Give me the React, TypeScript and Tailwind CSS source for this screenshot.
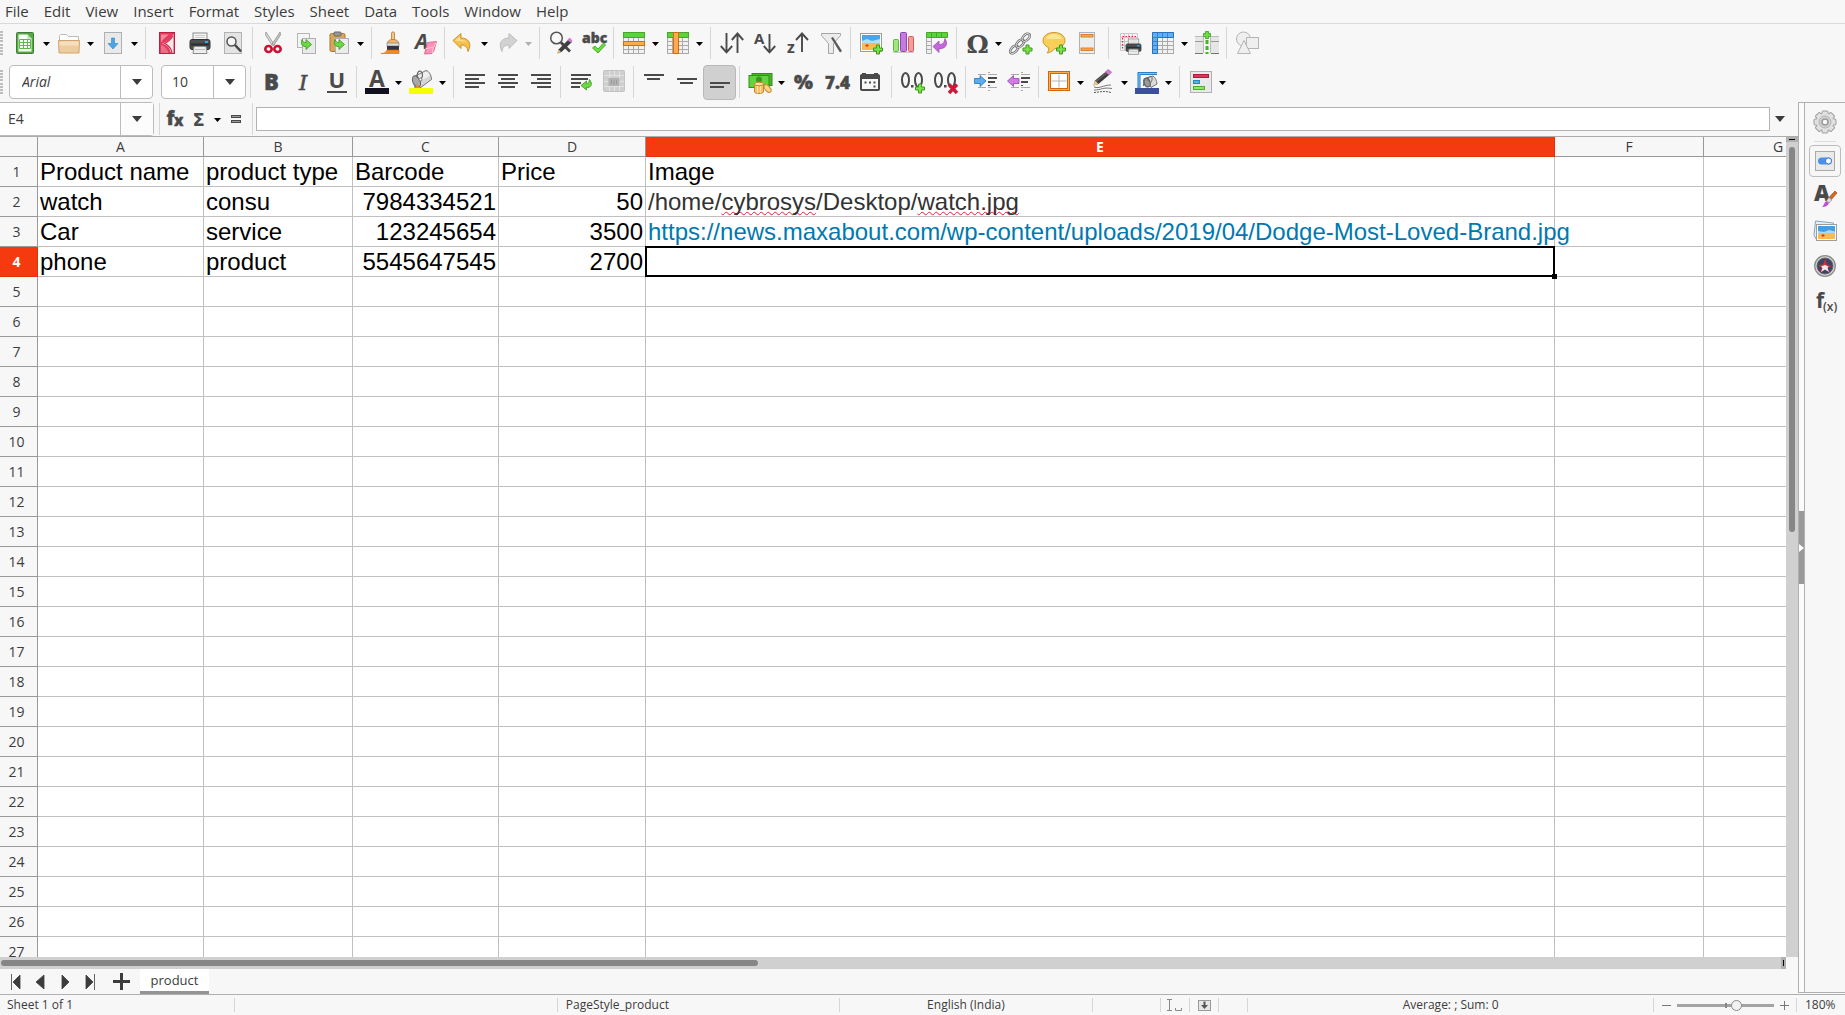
import React from "react";

const ui = "Open Sans, sans-serif";
const dark = "#4a4a4a";

const Plus = ({ x, y }: { x: number; y: number }) => (
  <path
    transform={`translate(${x} ${y})`}
    d="M3.500 .5h3v3h3v3h-3v3h-3v-3h-3v-3h3z"
    fill="#7be04a"
    stroke="#3f9a1e"
  />
);

const Lines = ({ rows }: { rows: [number, number, number][] }) => (
  <g fill={dark}>
    {rows.map(([x, y, w]) => (
      <rect key={y} x={x} y={y} width={w} height="2" />
    ))}
  </g>
);

const Printer = () => (
  <g>
    <rect x="5" y="2" width="14" height="8" fill="#f4f4f4" stroke="#8a8a8a" />
    <path d="M7 4.500h10M7 6.500h10" stroke="#ccc" />
    <rect x="2" y="8.500" width="20" height="10" rx="2" fill="#4b4f52" stroke="#333" />
    <path d="M3 13.500h18" stroke="#2c2e30" strokeWidth="2" />
    <rect x="17" y="10" width="3" height="2" fill="#35a7e8" />
    <path d="M6 15.500h12l1 7H5z" fill="#eee" stroke="#8a8a8a" />
    <path d="M7 18.500h10" stroke="#bbb" />
  </g>
);

const Grid = ({ c = "#aaa" }: { c?: string }) => (
  <g>
    <rect x="1.500" y="1.500" width="21" height="21" fill="#f1f1f1" stroke={c} />
    <path d="M2 6.500h20M2 10.500h20M2 14.500h20M2 18.500h20M6.500 2v20M11.500 2v20M16.500 2v20" stroke={c} fill="none" />
  </g>
);

const chain = [
  [5, 18.5],
  [11, 12.5],
  [17, 6.5],
];

const icons: Record<string, React.ReactNode> = {
  new: (
    <g>
      <rect x="3.500" y="1.500" width="17" height="21" rx="1" fill="#56a846" stroke="#3d7f31" />
      <path d="M5.500 3.500h9l4 4v13h-13z" fill="#f8fcf6" />
      <path d="M14.500 3.500l4 4h-4z" fill="#a8db9a" />
      <path d="M6.500 8.500h11v9h-11zM6.500 11.500h11M6.500 14.500h11M10.500 8.500v9M14.500 8.500v9" fill="none" stroke="#63b653" />
    </g>
  ),
  open: (
    <g>
      <path d="M2.500 10V4.500l1-1h6l2 2h10V10z" fill="#fdfdfd" stroke="#bbb" />
      <path d="M1.500 9.500h21l-.5 12.500H2z" fill="#edcda0" stroke="#cfa56d" />
      <path d="M2.500 10.500h19v4h-19z" fill="#f6dfbf" />
    </g>
  ),
  save: (
    <g>
      <rect x="3.500" y="1.500" width="17" height="21" fill="#e9e9e9" stroke="#b0b0b0" />
      <path d="M10.500 7h3v5.500h3.500L12 18 7 12.500h3.500z" fill="#4aa5e8" stroke="#2f86cb" strokeWidth=".6" />
    </g>
  ),
  pdf: (
    <g>
      <rect x="4.500" y="1.500" width="15" height="21" fill="#e33b5d" stroke="#bd1e41" />
      <path d="M6 3.500h8C10 6 8 9 6 11.500z" fill="#f2889e" />
      <path d="M18.500 3v19l-3-1C15 17 12 14 7 12.500 12 11.500 16 8 18.500 3z" fill="#fbe6ea" />
      <path d="M18 5c-2 3-5 6-8.500 7.500C13 14 16 17 17 21.500" fill="none" stroke="#cf2a4d" strokeWidth="1.200" />
      <path d="M6 14c4 1 6.500 4 7.500 8H6z" fill="#ee6d88" />
    </g>
  ),
  print: <Printer />,
  preview: (
    <g>
      <rect x="3.500" y="1.500" width="17" height="21" fill="#e4e4e4" stroke="#b3b3b3" />
      <circle cx="10.500" cy="10.500" r="4.500" fill="#f6f6f6" stroke="#555" strokeWidth="1.500" />
      <path d="M14 14l6 6.500" stroke="#444" strokeWidth="2.500" />
    </g>
  ),
  cut: (
    <g>
      <path d="M5 1l8.500 13h-2.500L4.500 4z" fill="#ddd" stroke="#8e8e8e" strokeWidth=".8" />
      <path d="M19 1l-8.500 13h2.500L19.500 4z" fill="#c5c5c5" stroke="#8e8e8e" strokeWidth=".8" />
      <ellipse cx="7.500" cy="18" rx="3.200" ry="3" fill="#fff" stroke="#cf1030" strokeWidth="2.600" />
      <ellipse cx="16.500" cy="18" rx="3.200" ry="3" fill="#fff" stroke="#cf1030" strokeWidth="2.600" />
    </g>
  ),
  copy: (
    <g>
      <rect x="3.500" y="2.500" width="12" height="14" fill="#f5f5f5" stroke="#b5b5b5" />
      <rect x="8.500" y="7.500" width="13" height="15" fill="#e9e9e9" stroke="#b0b0b0" />
      <path d="M8 8.500c-2 5 1 7.500 4 7v3l5.500-5-5.500-5v3c-2 0-3.500-.5-4-3z" fill="#6bd844" stroke="#3a9420" strokeWidth=".8" />
    </g>
  ),
  paste: (
    <g>
      <rect x="3" y="2.500" width="15" height="18" rx="1.500" fill="#d9a55c" stroke="#a97731" />
      <rect x="7" y="1" width="7" height="4" rx="1" fill="#999" stroke="#666" />
      <rect x="8.500" y="7.500" width="13" height="15" fill="#ececec" stroke="#b0b0b0" />
      <path d="M8 8.500c-2 5 1 7.500 4 7v3l5.500-5-5.500-5v3c-2 0-3.500-.5-4-3z" fill="#6bd844" stroke="#3a9420" strokeWidth=".8" />
    </g>
  ),
  brush: (
    <g>
      <path d="M10.500 2c0-1.500 3-1.500 3 0v7h-3z" fill="#f2c488" stroke="#b87a35" strokeWidth=".8" />
      <path d="M6.500 12.500c0-3 2-4 5.500-4s5.500 1 5.500 4z" fill="#f4b564" stroke="#b87a35" strokeWidth=".8" />
      <rect x="6" y="12" width="12" height="3" fill="#dcdcdc" stroke="#777" strokeWidth=".6" />
      <rect x="6" y="15" width="12" height="4" fill="#33363c" />
      <path d="M6 19h12v3.500H0c3 0 5-.8 6-3.500z" fill="#f08c28" stroke="#c76b12" strokeWidth=".6" />
    </g>
  ),
  clear: (
    <g>
      <text x="1" y="18" fontFamily={ui} fontSize="21" fontWeight="700" fontStyle="italic" fill={dark}>A</text>
      <path d="M13.500 11.500l9-1-2.500 9-2 3-7.500.5 1.500-6z" fill="#ff8fb4" stroke="#d65c86" strokeWidth=".8" />
      <path d="M11.500 17.500l8-1 2.500-5M19.500 16.500l-1.500 5.500" fill="none" stroke="#ffd0de" strokeWidth=".9" />
    </g>
  ),
  undo: (
    <g>
      <path d="M2 9.500l8-7v4.500c7 0 11.500 5 7 13.500-.3-4.500-3-6.500-7-6.500v3.500z" fill="#f5c04c" stroke="#d08f26" />
      <path d="M4 9.500l5-4.500v3.500c3 0 5.500 1 7 3-3-1-6-1.500-11.500-1.500z" fill="#fbdc8c" />
    </g>
  ),
  redo: (
    <path d="M22 9.500l-8-7v4.500c-7 0-11.500 5-7 13.500.3-4.500 3-6.500 7-6.500v3.500z" fill="#d2d2d2" stroke="#bdbdbd" />
  ),
  find: (
    <g>
      <circle cx="7.500" cy="7" r="5.800" fill="#f8f8f8" stroke="#555" strokeWidth="1.500" />
      <path d="M12 11.500l9 9" stroke="#444" strokeWidth="2.800" />
      <path d="M20 8l3 3L12.500 21l-4 1.500 1-4z" fill="#3f3f3f" />
      <path d="M18.500 9l2-2.500 3 3-2 2z" fill="#d979d2" />
      <path d="M9.500 18.500l2.500 2.500-4 1.500z" fill="#e7c188" />
    </g>
  ),
  spell: (
    <g>
      <text x="0" y="12" fontFamily={ui} fontSize="14" fontWeight="800" fill={dark} stroke={dark} strokeWidth=".4">abc</text>
      <path d="M10.500 17l2.500-2 3 3 5.500-6 2 2-7.500 8z" fill="#6bdc41" stroke="#3a9a1c" strokeWidth=".8" />
    </g>
  ),
  row: (
    <g>
      <Grid />
      <rect x="1.500" y="1.500" width="21" height="5" fill="#5fd23a" stroke="#45a827" />
      <rect x="1.500" y="10.500" width="21" height="4" fill="#ffab4d" stroke="#d86b12" />
    </g>
  ),
  col: (
    <g>
      <Grid />
      <rect x="1.500" y="1.500" width="21" height="5" fill="#5fd23a" stroke="#45a827" />
      <rect x="7.500" y="1.500" width="5" height="21" fill="#ffab4d" stroke="#d86b12" />
    </g>
  ),
  sort: (
    <path d="M6.500 2v19M.8 15l5.700 6.300L12.200 15M17.500 22V2.500M11.800 9l5.700-6.500L23.200 9" fill="none" stroke={dark} strokeWidth="1.900" />
  ),
  az: (
    <g>
      <text x="1" y="12.500" fontFamily={ui} fontSize="15" fontWeight="700" fill={dark}>A</text>
      <path d="M16.500 3v18M10.800 15l5.700 6.300 5.700-6.300" fill="none" stroke={dark} strokeWidth="1.900" />
    </g>
  ),
  za: (
    <g>
      <text x="1" y="22" fontFamily={ui} fontSize="16" fontWeight="700" fill={dark}>z</text>
      <path d="M16 21V2.500M10 9l6-6.500L22 9" fill="none" stroke={dark} strokeWidth="1.900" />
    </g>
  ),
  filter: (
    <g>
      <path d="M2.500 2.500h19v2l-7 8v10h-5v-10l-7-8z" fill="#ececec" stroke="#a5a5a5" />
      <path d="M12 7l2-1 9 14-2 1.500z" fill="#5a5a5a" />
    </g>
  ),
  image: (
    <g>
      <rect x="1.500" y="2.500" width="21" height="18" fill="#fff" stroke="#9d9d9d" />
      <rect x="3" y="4" width="18" height="9" fill="#4aa6ea" />
      <path d="M3 10l5-2 5 2 8-2v5H3z" fill="#b4ddf8" />
      <rect x="3" y="12" width="18" height="7" fill="#f7bb54" />
      <path d="M6 14.500l2-1.500 2 1.500-2 1.500z" fill="#e33b2e" />
      <Plus x={14} y={13.5} />
    </g>
  ),
  chart: (
    <g>
      <rect x="1.500" y="8.500" width="5" height="12" rx="1" fill="#a1e57f" stroke="#5bb938" />
      <rect x="8.500" y="1.500" width="6" height="19" rx="1" fill="#c47be0" stroke="#9442b8" />
      <rect x="16.500" y="5.500" width="5" height="15" rx="1" fill="#f29c9c" stroke="#d25959" />
      <path d="M1 21.500h21" stroke="#ccc" />
    </g>
  ),
  pivot: (
    <g>
      <path d="M1.500 6.500h5v16h-5zM1.500 10.500h5M1.500 14.500h5M1.500 18.500h5" fill="#eee" stroke="#aaa" />
      <path d="M1.500 1.500h21v5h-21zM6.500 2v4M11.500 2v4M16.500 2v4" fill="#5fd23a" stroke="#45a827" />
      <path d="M8 15.500l6-5.500v3.500c4 0 5-1.500 6-6 4 7-.5 10.500-6 10v4z" fill="#c566dd" stroke="#9a3fb4" strokeWidth=".7" />
    </g>
  ),
  omega: (
    <text x="1.500" y="21.500" fontFamily="DejaVu Serif, serif" fontSize="25" fontWeight="700" fill={dark}>Ω</text>
  ),
  link: (
    <g fill="none">
      {chain.map(([x, y]) => (
        <g key={x} transform={`rotate(45 ${x} ${y})`}>
          <ellipse cx={x} cy={y} rx="2.700" ry="4.600" stroke="#6d6d6d" strokeWidth="2.600" />
          <ellipse cx={x} cy={y} rx="2.700" ry="4.600" stroke="#dcdcdc" strokeWidth="1" />
        </g>
      ))}
      <Plus x={13.5} y={13.5} />
    </g>
  ),
  comment: (
    <g>
      <path d="M12 1.500c6.500 0 11 3.500 11 8s-4.500 8-10 8c-3 3-5 4-8 4.500 1.500-1.500 2-3.500 1.500-5.500C3 15 1 12.500 1 9.500c0-4.500 4.500-8 11-8z" fill="#f9cf58" stroke="#cf962c" />
      <path d="M4 8c1-3 4-5 8-5s7 2 8 5z" fill="#fde596" />
      <Plus x={14} y={13.5} />
    </g>
  ),
  header: (
    <g>
      <rect x="4.500" y="1.500" width="15" height="21" fill="#ededed" stroke="#b0b0b0" />
      <rect x="6" y="3.500" width="12" height="2.500" fill="#ffab4d" stroke="#d86b12" strokeWidth=".8" />
      <rect x="6" y="17" width="12" height="2.500" fill="#ffab4d" stroke="#d86b12" strokeWidth=".8" />
    </g>
  ),
  printarea: (
    <g>
      <path d="M2.500 2.500h17v17h-17zM6.500 3v17M10.500 3v17M14.500 3v17M3 6.500h17M3 10.500h17M3 14.500h17" fill="#f4f4f4" stroke="#c9c9c9" />
      <path d="M18 5.500H4.500V18" fill="none" stroke="#e02045" strokeWidth="1.200" strokeDasharray="1.500 1.500" />
      <g transform="translate(6.500 6.500) scale(.75)"><Printer /></g>
    </g>
  ),
  freeze: (
    <g>
      <Grid />
      <path d="M1.500 1.500h21v5h-16v16h-5z" fill="#5fb0f2" stroke="#2b73b8" />
      <path d="M2 6.500h4M2 10.500h4M2 14.500h4M2 18.500h4M6.500 2v4M11.500 2v4M16.500 2v4" stroke="#2b73b8" strokeWidth=".7" />
    </g>
  ),
  split: (
    <g>
      <path d="M0 5.500h8M16 5.500h8M8.500 5v17M15.500 5v17" stroke="#bbb" />
      <path d="M0 6h8v4H0zM16 6h8v4h-8zM0 11h8v11H0zM16 11h8v11h-8z" fill="#e6e6e6" />
      <path d="M0 10.500h8M16 10.500h8" stroke="#999" />
      <path d="M0 22.500h8M16 22.500h8" stroke="#777" />
      <path d="M12 9v14" stroke="#45b524" strokeWidth="3" strokeDasharray="4 2" />
      <path d="M10.500 .5h3v2h2v3h-2v2h-3v-2h-2v-3h2z" fill="#6bdc41" stroke="#3a9a1c" strokeWidth=".8" />
    </g>
  ),
  shapes: (
    <g fill="#efefef" stroke="#b5b5b5">
      <circle cx="8.500" cy="8" r="7" />
      <rect x="11.500" y="6.500" width="12" height="11" />
      <path d="M9 9.500l6.500 13h-13z" />
    </g>
  ),
  bold: <text x="5" y="20" fontFamily={ui} fontSize="22" fontWeight="800" fill={dark} stroke={dark} strokeWidth=".5">B</text>,
  italic: <text x="7" y="20" fontFamily="DejaVu Serif, serif" fontSize="21" fontStyle="italic" fontWeight="400" fill={dark} stroke={dark} strokeWidth=".6">I</text>,
  underline: (
    <g>
      <text x="3.500" y="18" fontFamily={ui} fontSize="22" fontWeight="700" fill={dark}>U</text>
      <rect x="2" y="21" width="20" height="2" fill={dark} />
    </g>
  ),
  fontcolor: (
    <g>
      <text x="4" y="16.500" fontFamily={ui} fontSize="23" fontWeight="700" fill={dark}>A</text>
      <rect x="0" y="18" width="24" height="6" fill="#101020" />
    </g>
  ),
  highlight: (
    <g>
      <path d="M4.500 7L17 .5c3 .5 5.500 5 5.500 9L11 18H6z" fill="#d6d6d6" stroke="#777" />
      <path d="M9 5.500l8-4c2 .5 3 2 4 4L12 11z" fill="#efefef" />
      <ellipse cx="7.500" cy="11.500" rx="3.600" ry="6" transform="rotate(-25 7.500 11.500)" fill="#a9a9a9" stroke="#666" />
      <path d="M8.500 8C7 3 10 0 12 1.500s2 5 0 8" fill="none" stroke="#666" strokeWidth="1.200" />
      <circle cx="11.500" cy="9.500" r="1.500" fill="#eee" stroke="#666" strokeWidth=".8" />
      <path d="M8 13.500l3 4.500H7z" fill="#f08c28" />
      <rect x="0" y="18" width="24" height="6" fill="#f4ff00" />
    </g>
  ),
  left: <Lines rows={[[2, 4, 20], [2, 8, 14], [2, 12, 20], [2, 16, 14]]} />,
  center: <Lines rows={[[2, 4, 20], [5, 8, 14], [2, 12, 20], [5, 16, 14]]} />,
  right: <Lines rows={[[2, 4, 20], [8, 8, 14], [2, 12, 20], [8, 16, 14]]} />,
  wrap: (
    <g>
      <Lines rows={[[2, 4, 20], [2, 8, 17], [2, 12, 10], [2, 16, 9]]} />
      <path d="M12 15.500l5.500-4.500v2.500c2 0 2.500-1 3-4 4 5 1 8.500-3 8v2.500z" fill="#6bd844" stroke="#3a9420" strokeWidth=".8" />
    </g>
  ),
  merge: (
    <g>
      <rect x="1.500" y=".5" width="21" height="21" rx="1" fill="#cfcfcf" stroke="#c2c2c2" />
      <path d="M2 5.500h20M2 16.500h20M7.500 1v20M12.500 1v5M12.500 17v4M17.500 1v20M2 11.500h5M18 11.500h4" stroke="#e4e4e4" />
      <rect x="6.500" y="8" width="11" height="8" fill="#b2b2b2" />
      <path d="M9.500 10v4M12 10v4M14.500 10v4" stroke="#9a9a9a" />
    </g>
  ),
  top: <Lines rows={[[2, 4, 20], [5, 8, 13]]} />,
  middle: <Lines rows={[[2, 8, 20], [5, 12, 13]]} />,
  bottom: <Lines rows={[[2, 12, 20], [2, 16, 14]]} />,
  currency: (
    <g>
      <rect x="4" y="3.500" width="20" height="12" fill="#48b828" stroke="#2f8f17" />
      <rect x="1" y="5.500" width="20" height="12" fill="#62d53c" stroke="#2f8f17" />
      <circle cx="11" cy="9.500" r="3" fill="#349a1b" />
      <ellipse cx="19.500" cy="18.500" rx="2.500" ry="4.500" transform="rotate(-40 19.500 18.500)" fill="#fbd48c" stroke="#c8862c" />
      <path d="M6.500 14v8c1 2 8 2 9 0v-8z" fill="#f6c069" stroke="#c8862c" />
      <ellipse cx="11" cy="14" rx="4.500" ry="1.800" fill="#fde0a8" stroke="#c8862c" />
      <path d="M9.500 16v7M12.500 16v7" stroke="#fbe1b2" />
    </g>
  ),
  percent: <text x="2" y="19" fontFamily={ui} fontSize="20" fontWeight="800" fill={dark} stroke={dark} strokeWidth=".5">%</text>,
  number: <text x="0" y="18.500" fontFamily={ui} fontSize="17" fontWeight="800" fill={dark} stroke={dark} strokeWidth=".5">7.4</text>,
  date: (
    <g>
      <rect x="3" y="5" width="18" height="15" rx="1" fill="#f7f7f7" stroke={dark} strokeWidth="2" />
      <path d="M2 5.500h20v3.500H2zM4 3h4v3H4zM16 3h4v3h-4z" fill={dark} />
      <path d="M6.500 11.500h2v2h-2zM11 11.500h2v2h-2zM15.500 11.500h2v2h-2zM15.500 15.500h2v2h-2z" fill={dark} />
    </g>
  ),
  decadd: (
    <g>
      <g fill="none" stroke={dark} strokeWidth="2">
        <ellipse cx="4.500" cy="10" rx="3.500" ry="7" />
        <ellipse cx="17.500" cy="10" rx="3.500" ry="7" />
      </g>
      <rect x="10" y="15" width="2.500" height="2.500" fill={dark} />
      <Plus x={14} y={13.5} />
    </g>
  ),
  decdel: (
    <g>
      <g fill="none" stroke={dark} strokeWidth="2">
        <ellipse cx="4.500" cy="10" rx="3.500" ry="7" />
        <ellipse cx="17.500" cy="10" rx="3.500" ry="7" />
      </g>
      <rect x="10" y="15" width="2.500" height="2.500" fill={dark} />
      <path d="M15 14.500l8 8.500M23 14.500l-8 8.500" stroke="#cf1838" strokeWidth="3.400" />
    </g>
  ),
  indent: (
    <g>
      <path d="M4 4.500h8M4 17.500h8M14 2.500h2M14 4.500h9M14 17.500h9M14 20.500h2" stroke="#aaa" />
      <path d="M14 8h9M14 12h7" stroke={dark} strokeWidth="2" />
      <path d="M14 15.500h2" stroke={dark} />
      <path d="M.5 8.500h5.500v-3l6 5.500-6 5.500v-3H.5z" fill="#58acf0" stroke="#2a72b4" strokeWidth=".8" />
    </g>
  ),
  outdent: (
    <g>
      <path d="M4 4.500h8M4 17.500h8M14 2.500h2M14 4.500h9M14 17.500h9M14 20.500h2" stroke="#aaa" />
      <path d="M14 8h9M14 12h7" stroke={dark} strokeWidth="2" />
      <path d="M14 15.500h2" stroke={dark} />
      <path d="M12 8.500H6.500v-3l-6 5.500 6 5.500v-3H12z" fill="#cf7be3" stroke="#9942b4" strokeWidth=".8" />
    </g>
  ),
  borders: (
    <g>
      <rect x="2.500" y="2.500" width="19" height="17" fill="#fff" stroke="#d4660c" strokeWidth="3" />
      <rect x="2.500" y="2.500" width="19" height="17" fill="none" stroke="#ffb054" />
      <path d="M12 4.500v13M4.500 11h15" stroke="#b5b5b5" />
    </g>
  ),
  line: (
    <g>
      <path d="M3 17c6 2 9-2 17-2M3 20c8 0 8-3 18-1.500" fill="none" stroke="#777" />
      <path d="M3 22.500c7-.5 10-2 17 0" fill="none" stroke="#555" strokeDasharray="2 1" />
      <path d="M2.500 15.500l1.500-5L14.500 2l3.500 3L7.500 14z" fill="#3e3e3e" />
      <path d="M5 11.500L15.500 3" stroke="#777" />
      <path d="M14.500 2L17-.5 20.500 2 18 5z" fill="#d979d2" stroke="#a04a9a" strokeWidth=".6" />
      <path d="M2.500 15.500l1.500-5 3.500 3.500z" fill="#ecc88f" />
    </g>
  ),
  fill: (
    <g>
      <path d="M4 18V3.500h18" fill="none" stroke="#2f7fc6" strokeWidth="3" />
      <path d="M4 18V3.500h18" fill="none" stroke="#7cc2f6" />
      <path d="M11 8l7-2c2 1 4 5 4 8l-6 3.500z" fill="#dadada" stroke="#777" />
      <ellipse cx="12" cy="12.500" rx="3" ry="4.500" transform="rotate(-20 12 12.500)" fill="#9a9a9a" stroke="#555" />
      <path d="M13 11c0-3 1-5 3-4.500s1 4 0 6" fill="none" stroke="#666" />
      <path d="M8.500 16c0-4 1-6 2.500-8" fill="none" stroke="#666" />
      <rect x="0" y="18" width="24" height="6" fill="#3b4f9e" />
    </g>
  ),
  cond: (
    <g>
      <rect x="1.500" y="1.500" width="21" height="21" fill="#e9e9e9" stroke="#b0b0b0" />
      <rect x="4.500" y="4.500" width="15" height="3" fill="#e0355a" stroke="#b01c3e" />
      <rect x="4.500" y="10.500" width="6" height="3" fill="#5aaef0" stroke="#2f7fc6" />
      <rect x="4.500" y="16.500" width="11" height="3" fill="#8ee36a" stroke="#4fae2d" />
    </g>
  ),
  fx: (
    <g fontFamily={ui} fontWeight="800" fill={dark} stroke={dark} strokeWidth=".4">
      <text x="2.500" y="18" fontSize="19">f</text>
      <text x="10" y="19" fontSize="15">x</text>
    </g>
  ),
  sum: <text x="4.500" y="18.500" fontFamily="DejaVu Sans, sans-serif" fontSize="18" fontWeight="700" fill={dark}>Σ</text>,
  equals: (
    <g fill="#999" stroke={dark}>
      <rect x="7.500" y="8.500" width="9" height="2" />
      <rect x="7.500" y="13.500" width="9" height="2" />
    </g>
  ),
  gear: (
    <g>
      {[0, 45, 90, 135].map((a) => (
        <rect key={a} x="9" y="1" width="6" height="22" rx="1" fill="#e1e1e1" stroke="#9d9d9d" transform={`rotate(${a} 12 12)`} />
      ))}
      <circle cx="12" cy="12" r="8.500" fill="#e1e1e1" />
      <circle cx="12" cy="12" r="6" fill="#d2d2d2" stroke="#b2b2b2" />
      <circle cx="12" cy="12" r="3" fill="#f7f7f7" stroke="#999" strokeWidth="1.500" />
    </g>
  ),
  properties: (
    <g>
      <rect x="2.500" y="2.500" width="19" height="19" fill="#e9e9e9" stroke="#aaa" />
      <rect x="5" y="8.500" width="14" height="7" rx="3.500" fill="#4a90e8" />
      <circle cx="15.500" cy="12" r="3" fill="#fff" stroke="#3b7bcf" />
    </g>
  ),
  styles: (
    <g>
      <text x="1" y="17" fontFamily={ui} fontSize="22" fontWeight="800" fill={dark}>A</text>
      <path d="M22 7l2 2-7 8-2.500-2z" fill="#d9661f" stroke="#8e3d10" strokeWidth=".6" />
      <path d="M16 13.500l3 2.500-3 3-2.500-2.500z" fill="#ddd" stroke="#888" strokeWidth=".6" />
      <path d="M13.500 17l2.500 2c-1.500 3-3.500 4-7 4 2-1.500 2-4.500 4.500-6z" fill="#c14fd6" />
    </g>
  ),
  gallery: (
    <g>
      <path d="M3 20L1 16 2.500 2l18 2v6z" fill="#dff1fb" stroke="#8aa4b5" />
      <rect x="3.500" y="5.500" width="20" height="16" fill="#fff" stroke="#9d9d9d" />
      <rect x="5" y="7" width="17" height="7" fill="#3f9fe8" />
      <path d="M5 12l6 1 5-2 6 1.500V15H5z" fill="#a9d8f7" />
      <rect x="5" y="14" width="17" height="6" fill="#f7bb54" />
      <path d="M8 16.500l2-1.500 2 1.500-2 1.500z" fill="#e33b2e" />
    </g>
  ),
  navigator: (
    <g>
      <circle cx="12" cy="12" r="10.300" fill="#d4d4d4" stroke="#8c8c8c" strokeWidth="1.300" />
      <circle cx="12" cy="12" r="8" fill="#3e4468" stroke="#666" />
      <path d="M12.500 4.500l1 6 5.500 1.500-4.500 2 1.500 4-4-2.500-4.500 3 1.500-4.500L5 11l5-.5z" fill="#d92b3a" />
      <path d="M12 11l3.500 1.500-1 1.500 1.500 4-4-2.500-4 2.500 1.500-4-1.500-1.500z" fill="#ececec" />
    </g>
  ),
  functions: (
    <g fontFamily={ui} fill={dark}>
      <text x="3" y="19" fontSize="21" fontWeight="700">f</text>
      <text x="10" y="22" fontSize="12" fontWeight="600">(x)</text>
    </g>
  ),
};

const Icon = ({ name }: { name: string }) => (
  <svg viewBox="0 0 24 24" className="size-6 shrink-0 overflow-visible" aria-hidden="true">
    {icons[name]}
  </svg>
);

const Caret = ({ className = "fill-black" }: { className?: string }) => (
  <svg viewBox="0 0 7 4" className={`h-1 w-[7px] ${className}`} aria-hidden="true">
    <path d="M0 0h7L3.500 4z" />
  </svg>
);

const BigCaret = () => (
  <svg viewBox="0 0 10 6" className="h-1.5 w-2.5 fill-[#3c3c3c]" aria-hidden="true">
    <path d="M0 0h10L5 6z" />
  </svg>
);

type Item = { k: "b" | "s" | "sep4" | "sep7" | "sep10"; icon?: string; label?: string; on?: boolean; off?: boolean };
const b = (icon: string, label: string): Item => ({ k: "b", icon, label });
const s = (icon: string, label: string): Item => ({ k: "s", icon, label });
const sep4: Item = { k: "sep4" };
const sep7: Item = { k: "sep7" };
const sep10: Item = { k: "sep10" };

const standardBar: Item[] = [
  s("new", "New"), s("open", "Open"), s("save", "Save"), sep10,
  b("pdf", "Export as PDF"), b("print", "Print"), b("preview", "Print Preview"), sep7,
  b("cut", "Cut"), b("copy", "Copy"), s("paste", "Paste"), sep10,
  b("brush", "Clone Formatting"), b("clear", "Clear Formatting"), sep4,
  s("undo", "Undo"), { ...s("redo", "Redo"), off: true }, sep10,
  b("find", "Find and Replace"), b("spell", "Spelling"), sep7,
  s("row", "Row"), s("col", "Column"), sep10,
  b("sort", "Sort"), b("az", "Sort Ascending"), b("za", "Sort Descending"), b("filter", "AutoFilter"), sep7,
  b("image", "Insert Image"), b("chart", "Insert Chart"), b("pivot", "Pivot Table"), sep7,
  s("omega", "Special Character"), b("link", "Hyperlink"), b("comment", "Comment"), b("header", "Headers and Footers"), sep10,
  b("printarea", "Define Print Area"), s("freeze", "Freeze Rows and Columns"), b("split", "Split Window"), sep7,
  b("shapes", "Draw Functions"),
];

const formatBar: Item[] = [
  b("bold", "Bold"), b("italic", "Italic"), b("underline", "Underline"), sep7,
  s("fontcolor", "Font Color"), s("highlight", "Background Color"), sep10,
  b("left", "Align Left"), b("center", "Center"), b("right", "Align Right"), sep7,
  b("wrap", "Wrap Text"), b("merge", "Merge Cells"), sep7,
  b("top", "Align Top"), b("middle", "Center Vertically"), { ...b("bottom", "Align Bottom"), on: true }, sep7,
  s("currency", "Currency"), b("percent", "Percent"), b("number", "Number"), b("date", "Date"), sep10,
  b("decadd", "Add Decimal Place"), b("decdel", "Delete Decimal Place"), sep7,
  b("indent", "Increase Indent"), b("outdent", "Decrease Indent"), sep7,
  s("borders", "Borders"), s("line", "Border Style"), s("fill", "Border Color"), sep10,
  s("cond", "Conditional Formatting"),
];

const sepWidth = { sep4: "w-1", sep7: "w-[7px]", sep10: "w-2.5" };

const Sep = ({ width }: { width: string }) => (
  <span className={`flex h-8 shrink-0 justify-center ${width}`}>
    <span className="w-px bg-[#d6d6d6]" />
  </span>
);

const Tools = ({ items }: { items: Item[] }) => (
  <>
    {items.map((it, i) => {
      if (it.k !== "b" && it.k !== "s") return <Sep key={i} width={sepWidth[it.k]} />;
      const main = (
        <button
          type="button"
          aria-label={it.label}
          aria-pressed={it.on}
          disabled={it.off}
          className={`flex h-[35px] w-[33px] shrink-0 items-center justify-center rounded-[4px] ${it.on ? "border border-[#b9b9b9] bg-[#d0d0d0]" : ""}`}
        >
          <Icon name={it.icon!} />
        </button>
      );
      if (it.k === "b") return <React.Fragment key={i}>{main}</React.Fragment>;
      return (
        <span key={i} className="flex shrink-0">
          {main}
          <button type="button" aria-label={`${it.label} options`} disabled={it.off} className="flex w-[11px] items-center justify-center pt-0.5">
            <Caret className={it.off ? "fill-[#b0b0b0]" : "fill-black"} />
          </button>
        </span>
      );
    })}
  </>
);

const Grip = () => (
  <span className="flex h-6 w-[3px] shrink-0 flex-col justify-between">
    {[0, 1, 2, 3, 4, 5, 6, 7].map((n) => (
      <span key={n} className="h-0.5 bg-[#bdbdbd]" />
    ))}
  </span>
);

const Combo = ({ label, value, options, className, pad }: { label: string; value: string; options: string[]; className: string; pad: string }) => (
  <div className={`relative h-[34px] shrink-0 ${className}`}>
    <select aria-label={label} defaultValue={value} className={`size-full appearance-none rounded-[4px] border border-[#bcbcbc] bg-white pr-9 text-[#3c3c3c] ${pad}`}>
      {options.map((o) => (
        <option key={o}>{o}</option>
      ))}
    </select>
    <span className="pointer-events-none absolute inset-y-px right-px flex w-8 items-center justify-center border-l border-[#bcbcbc]">
      <BigCaret />
    </span>
  </div>
);

const menus = ["File", "Edit", "View", "Insert", "Format", "Styles", "Sheet", "Data", "Tools", "Window", "Help"];
const columns = [
  { n: "A", w: "w-[166px]" },
  { n: "B", w: "w-[149px]" },
  { n: "C", w: "w-[146px]" },
  { n: "D", w: "w-[147px]" },
  { n: "E", w: "w-[909px]" },
  { n: "F", w: "w-[149px]" },
  { n: "G", w: "w-[149px]" },
];

const Misspelt = ({ children }: { children: string }) => (
  <span className="underline decoration-[#e0203c] decoration-wavy decoration-1 underline-offset-1 [text-decoration-skip-ink:none]">{children}</span>
);

const rows: React.ReactNode[][] = [
  ["Product name", "product type", "Barcode", "Price", "Image"],
  [
    "watch", "consu", 7984334521, 50,
    <span className="text-[#333]">/home/<Misspelt>cybrosys</Misspelt>/Desktop/<Misspelt>watch.jpg</Misspelt></span>,
  ],
  [
    "Car", "service", 123245654, 3500,
    <a href="https://news.maxabout.com/wp-content/uploads/2019/04/Dodge-Most-Loved-Brand.jpg" className="text-[#0079b0]">
      https://news.maxabout.com/wp-content/uploads/2019/04/Dodge-Most-Loved-Brand.jpg
    </a>,
  ],
  ["phone", "product", 5545647545, 2700],
];

const Sheet = () => (
  <table className="w-[1853px] table-fixed border-separate border-spacing-0">
    <colgroup>
      <col className="w-[38px]" />
      {columns.map((c) => (
        <col key={c.n} className={c.w} />
      ))}
    </colgroup>
    <thead>
      <tr className="h-5 text-sm leading-[18px]">
        <td className="border-r border-b border-[#999] bg-[#f7f7f7] p-0" />
        {columns.map((c) => (
          <th
            key={c.n}
            scope="col"
            className={`border-r border-b p-0 ${c.n === "E" ? "border-[#e03208] bg-[#f63a10] font-bold text-white" : "border-[#999] bg-[#f7f7f7] font-normal"}`}
          >
            {c.n}
          </th>
        ))}
      </tr>
    </thead>
    <tbody>
      {Array.from({ length: 27 }, (_, r) => (
        <tr key={r} className="h-[30px]">
          <th
            scope="row"
            className={`border-r border-b p-0 pr-1 text-sm leading-5 ${r === 3 ? "border-[#e03208] bg-[#f63a10] font-bold text-white" : "border-[#999] bg-[#f7f7f7] font-normal"}`}
          >
            {r + 1}
          </th>
          {columns.map((c, i) => {
            const v = rows[r]?.[i];
            const selected = r === 3 && c.n === "E";
            return (
              <td
                key={c.n}
                className={`relative border-r border-b border-[#c0c0c0] px-0.5 py-0 font-['Liberation_Sans',Arial,sans-serif] text-2xl leading-[29px] whitespace-nowrap text-black ${typeof v === "number" ? "text-right" : "text-left"}`}
              >
                {v}
                {selected && (
                  <span className="absolute -inset-px z-10 border-2 border-black">
                    <span className="absolute -right-1 -bottom-1 size-[5px] bg-black" />
                  </span>
                )}
              </td>
            );
          })}
        </tr>
      ))}
    </tbody>
  </table>
);

const nav = [
  { label: "First sheet", d: "M1.500 0v16M10 1v14L3 8z" },
  { label: "Previous sheet", d: "M9 1v14L1 8z" },
  { label: "Next sheet", d: "M2 1v14l7-7z" },
  { label: "Last sheet", d: "M9.500 0v16M1 1v14l7-7z" },
];

const StatusSep = () => <span className="h-3.5 w-px shrink-0 bg-[#d6d6d6]" />;

export default function App() {
  return (
    <div className="flex h-screen flex-col overflow-hidden bg-[#f7f7f7] font-['Open_Sans',sans-serif] text-sm text-[#3c3c3c]">
      <nav className="flex h-6 shrink-0 items-center gap-[15px] border-b border-[#d9d9d9] pb-0.5 pl-[5px]">
        {menus.map((m) => (
          <button key={m} type="button" className="text-[15px] leading-5">{m}</button>
        ))}
      </nav>
      <div className="flex h-[39px] shrink-0 items-center pb-px" role="toolbar" aria-label="Standard">
        <Grip />
        <span className="w-[5px] shrink-0" />
        <Tools items={standardBar} />
      </div>
      <div className="flex h-[39px] shrink-0 items-center pb-px" role="toolbar" aria-label="Formatting">
        <Grip />
        <div className="ml-1.5 flex shrink-0 gap-2">
          <Combo label="Font name" value="Arial" options={["Arial", "Liberation Sans", "Ubuntu"]} className="w-36 italic" pad="pl-3" />
          <Combo label="Font size" value="10" options={["8", "9", "10", "12", "14"]} className="w-[85px]" pad="pl-2.5" />
        </div>
        <Sep width="w-2" />
        <Tools items={formatBar} />
      </div>

      <main className="flex min-h-0 flex-1">
        <section className="flex min-w-0 flex-1 flex-col">
          <div className="flex h-[34px] shrink-0 items-center">
            <div className="flex h-[34px] w-[154px] shrink-0 rounded-r-[4px] border border-l-0 border-[#bcbcbc] bg-white">
              <input aria-label="Name Box" defaultValue="E4" className="w-[121px] border-r border-[#bcbcbc] pl-2 outline-none" />
              <button type="button" aria-label="Name Box list" className="flex flex-1 items-center justify-center bg-[#fcfcfc]"><BigCaret /></button>
            </div>
            <Sep width="w-2.5" />
            <button type="button" aria-label="Function Wizard" className="w-6"><Icon name="fx" /></button>
            <button type="button" aria-label="Select Function" className="flex w-9 items-center">
              <Icon name="sum" />
              <span className="pt-0.5 pl-0.5"><Caret /></span>
            </button>
            <button type="button" aria-label="Formula" className="w-6"><Icon name="equals" /></button>
            <Sep width="w-2" />
            <input aria-label="Formula input" className="h-6 min-w-0 flex-1 border border-[#b3b3b3] bg-white px-1 outline-none" />
            <button type="button" aria-label="Expand Formula Bar" className="flex w-7 items-center pl-[5px]"><BigCaret /></button>
          </div>
          <div className="flex min-h-0 flex-1 border-t border-[#adadad]">
            <div className="min-w-0 flex-1 overflow-hidden bg-white">
              <Sheet />
            </div>
            <div className="flex w-3 shrink-0 flex-col bg-[#d0d0d0]">
              <span className="flex h-[5px] items-center justify-center bg-[#b0b0b0]"><span className="h-px w-1.5 bg-black" /></span>
              <span className="mx-auto mt-[5px] h-[47%] w-1.5 rounded-full bg-[#868686]" />
            </div>
          </div>
          <div className="mr-3 flex h-3 shrink-0 items-center bg-[#d0d0d0]">
            <span className="ml-px h-1.5 w-[42.4%] rounded-full bg-[#868686]" />
            <span className="ml-auto flex h-3 w-[5px] items-center justify-center bg-[#b0b0b0]"><span className="h-1.5 w-px bg-black" /></span>
          </div>
          <div className="flex h-[25px] shrink-0 items-center pl-2.5">
            <div className="flex gap-3.5">
              {nav.map((n) => (
                <button key={n.label} type="button" aria-label={n.label}>
                  <svg viewBox="0 0 11 16" className="h-4 w-[11px] fill-[#3c3c3c] stroke-[#3c3c3c]"><path d={n.d} strokeWidth=".8" /></svg>
                </button>
              ))}
            </div>
            <button type="button" aria-label="Add sheet" className="ml-[17px]">
              <svg viewBox="0 0 17 17" className="size-[17px] fill-[#3c3c3c]"><path d="M7 0h3v7h7v3h-7v7H7v-7H0V7h7z" /></svg>
            </button>
            <button type="button" className="ml-2.5 h-full w-[69px] border-b-[3px] border-[#949494] bg-white text-[13px] leading-5">product</button>
          </div>
        </section>

        <aside className="mb-px flex shrink-0 border-t border-b border-l border-[#b0b0b0]" aria-label="Sidebar">
          <div className="flex w-1.5 items-center border-r border-[#b0b0b0] bg-[#fbfbfb]">
            <button type="button" aria-label="Hide sidebar" className="flex h-[73px] w-full items-center bg-[#999]">
              <svg viewBox="0 0 5 8" className="h-2 w-[5px] fill-white"><path d="M0 0l5 4-5 4z" /></svg>
            </button>
          </div>
          <div className="flex w-10 flex-col items-center gap-[3px] pt-[3px]">
            <button type="button" aria-label="Sidebar settings" className="flex size-8 items-center justify-center"><Icon name="gear" /></button>
            <span className="h-px w-[22px] bg-[#dcdcdc]" />
            {["properties", "styles", "gallery", "navigator", "functions"].map((n, i) => (
              <button key={n} type="button" aria-label={n} className={`flex size-8 items-center justify-center rounded-[4px] ${i === 0 ? "border border-[#bcbcbc]" : ""}`}>
                <Icon name={n} />
              </button>
            ))}
          </div>
        </aside>
      </main>

      <footer className="flex h-[21px] shrink-0 items-center border-t border-[#b0b0b0] text-xs leading-5 whitespace-nowrap">
        <span className="w-[234px] shrink-0 pl-[7px]">Sheet 1 of 1</span>
        <StatusSep />
        <span className="flex-[322]" />
        <StatusSep />
        <span className="flex-[281]"><span className="pl-2">PageStyle_product</span></span>
        <StatusSep />
        <span className="flex-[253] text-center">English (India)</span>
        <StatusSep />
        <span className="w-[67px]" />
        <StatusSep />
        <button type="button" aria-label="Selection mode" className="flex w-7 justify-center">
          <svg viewBox="0 0 16 14" className="h-3.5 w-4 fill-none stroke-[#888]"><path d="M0 1.500h5M2.500 1.500v11M0 12.500h5M8.500 10v2.500h6V10" /></svg>
        </button>
        <StatusSep />
        <button type="button" aria-label="Document modified" className="flex w-7 justify-center">
          <svg viewBox="0 0 13 13" className="size-[13px]"><rect x=".5" y="1.500" width="12" height="10" fill="#e6e6e6" stroke="#999" /><path d="M5.500 2.500h2v3.500h2.500L6.500 10 3 6h2.500z" fill="#555" /></svg>
        </button>
        <StatusSep />
        <span className="w-7" />
        <StatusSep />
        <span className="flex-[405] text-center">Average: ; Sum: 0</span>
        <StatusSep />
        <div className="flex w-[142px] shrink-0 items-center justify-center gap-1.5">
          <button type="button" aria-label="Zoom out"><svg viewBox="0 0 9 9" className="size-[9px] stroke-[#777]"><path d="M0 4.500h9" /></svg></button>
          <div className="relative flex items-center">
            <input
              type="range"
              aria-label="Zoom"
              defaultValue={63}
              className="h-[3px] w-[97px] appearance-none bg-[#a3a3a3] [&::-webkit-slider-thumb]:size-[11px] [&::-webkit-slider-thumb]:appearance-none [&::-webkit-slider-thumb]:rounded-full [&::-webkit-slider-thumb]:border [&::-webkit-slider-thumb]:border-[#8a8a8a] [&::-webkit-slider-thumb]:bg-[#f2f2f2]"
            />
            <span className="pointer-events-none absolute left-1/2 h-[5px] w-0.5 bg-[#888]" />
          </div>
          <button type="button" aria-label="Zoom in"><svg viewBox="0 0 9 9" className="size-[9px] stroke-[#777]"><path d="M0 4.500h9M4.500 0v9" /></svg></button>
        </div>
        <StatusSep />
        <span className="w-12 shrink-0 pl-2">180%</span>
      </footer>
    </div>
  );
}
